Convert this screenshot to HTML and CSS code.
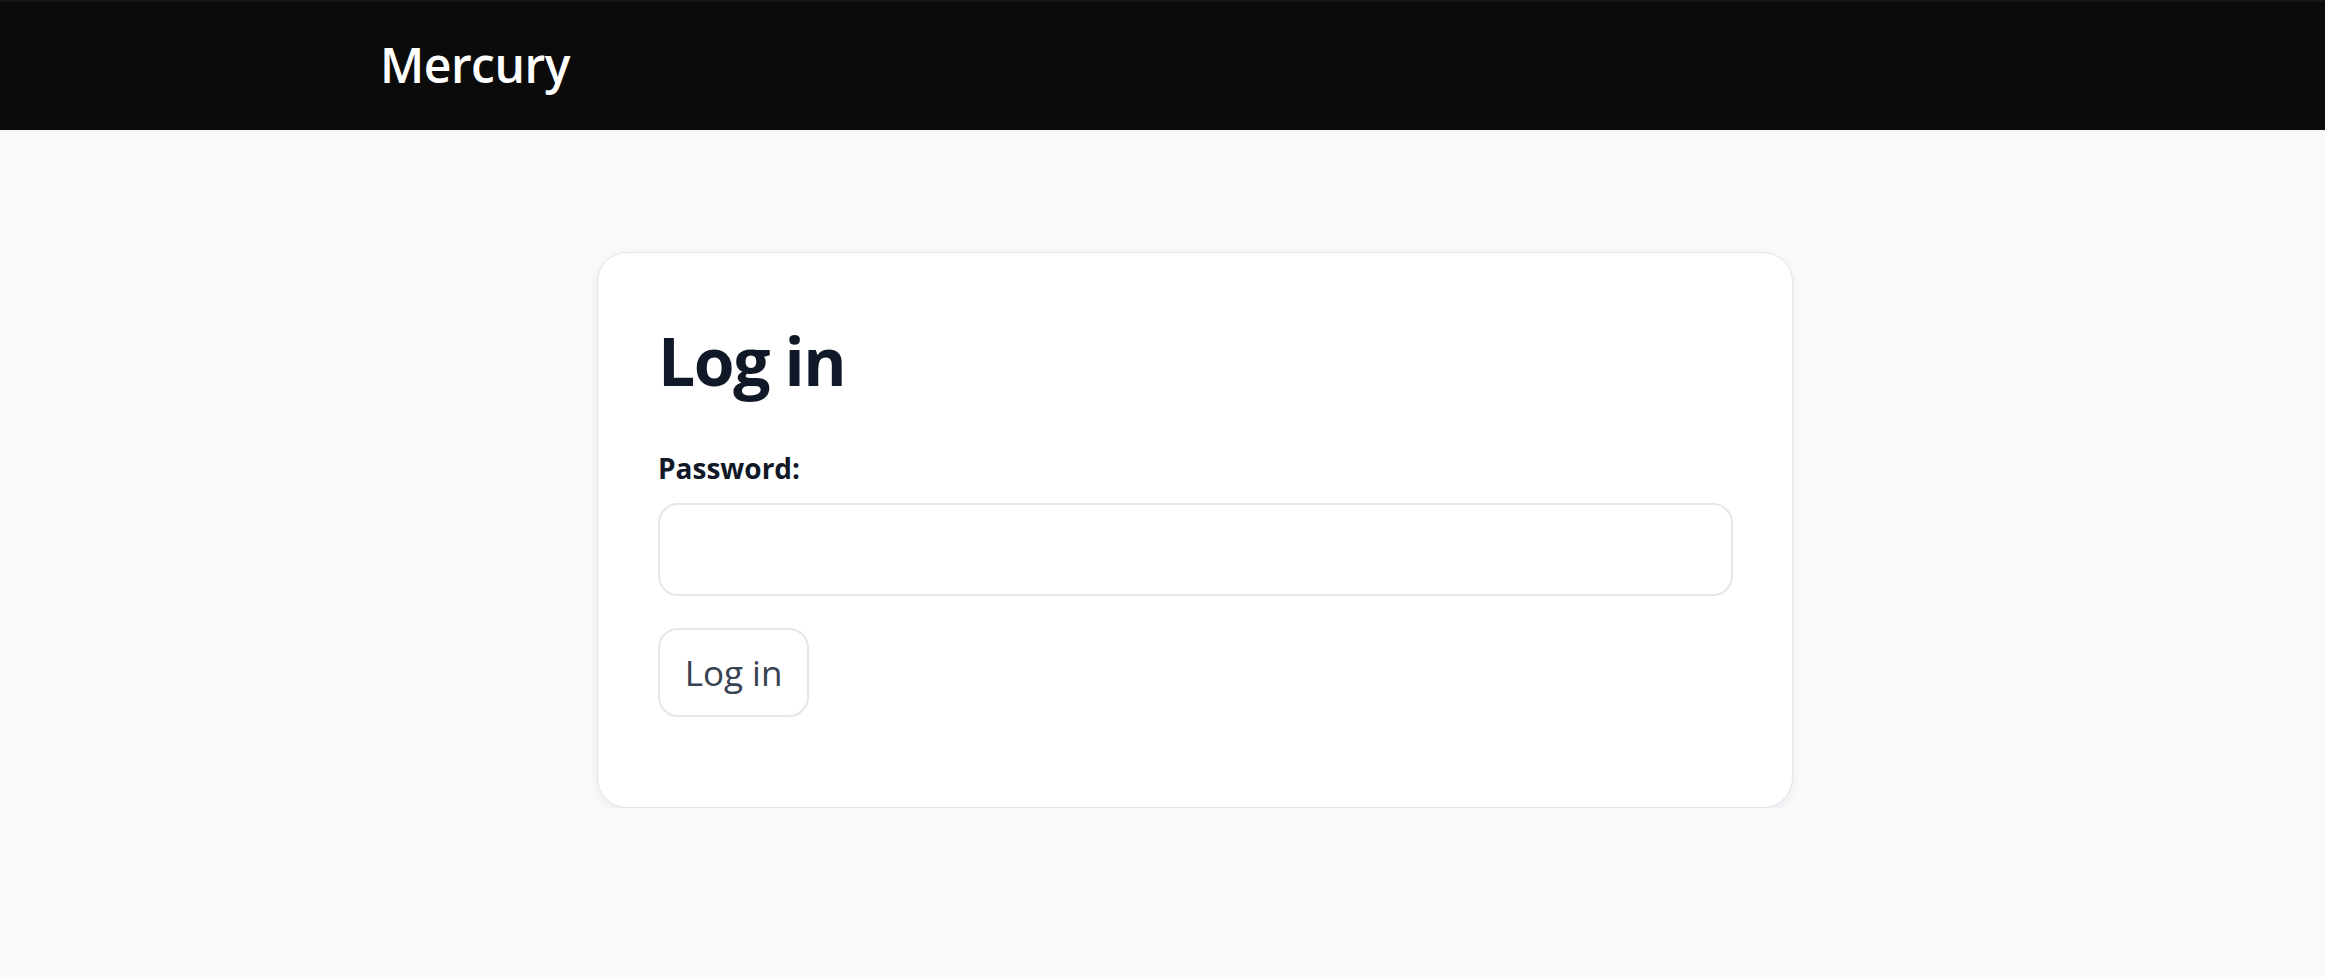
FILE: index.html
```html
<!DOCTYPE html>
<html lang="en">
<head>
<meta charset="utf-8">
<title>Mercury - Log in</title>
<link rel="stylesheet" href="styles.css">
</head>
<body>
<header class="topbar">
  <div class="topbar-inner">
    <a class="brand" href="#">Mercury</a>
  </div>
</header>
<main class="page">
  <section class="card">
    <h1 class="card-title">Log in</h1>
    <form class="login-form">
      <label class="field-label" for="password">Password:</label>
      <input class="field-input" id="password" type="password">
      <button class="btn" type="button">Log in</button>
    </form>
  </section>
</main>
</body>
</html>
```
FILE: styles.css
```css
* { box-sizing: border-box; }
html, body { margin: 0; padding: 0; }
body {
  background: #f8f9fb;
  font-family: "Open Sans", "Noto Sans", "DejaVu Sans", sans-serif;
  color: #111827;
}
.topbar {
  background: #0b0b0b;
  border-top: 2px solid #161616;
  height: 130px;
}
.topbar-inner {
  padding-left: 380px;
  height: 100%;
  display: flex;
  align-items: center;
}
.brand {
  color: #ffffff;
  text-decoration: none;
  font-size: 48px;
  font-weight: 600;
  letter-spacing: -0.5px;
  line-height: 1;
  margin-top: -2px;
}
.page {
  display: grid;
  grid-template-columns: 1196px;
  padding: 122px 0 0 597px;
}
.card {
  background: #ffffff;
  border: 1px solid #e3e5e8;
  border-radius: 30px;
  box-shadow: 0 3px 8px rgba(17, 24, 39, 0.06);
  padding: 66px 60px 90px 60px;
  height: 556px;
}
.card-title {
  margin: 0;
  font-size: 66px;
  font-weight: 700;
  line-height: 82px;
  color: #111827;
  letter-spacing: -1.5px;
}
.login-form {
  display: flex;
  flex-direction: column;
  align-items: flex-start;
  margin-top: 50px;
}
.field-label {
  font-size: 28px;
  font-weight: 700;
  line-height: 34px;
  color: #111827;
}
.field-input {
  margin-top: 18px;
  width: 1075px;
  height: 93px;
  border: 2px solid #e4e6e9;
  border-radius: 20px;
  background: #fff;
}
.btn {
  margin-top: 32px;
  width: 151px;
  height: 89px;
  border: 2px solid #e4e6e9;
  border-radius: 20px;
  background: #fff;
  font-family: inherit;
  font-size: 35px;
  color: #374151;
  padding: 0;
}
```
